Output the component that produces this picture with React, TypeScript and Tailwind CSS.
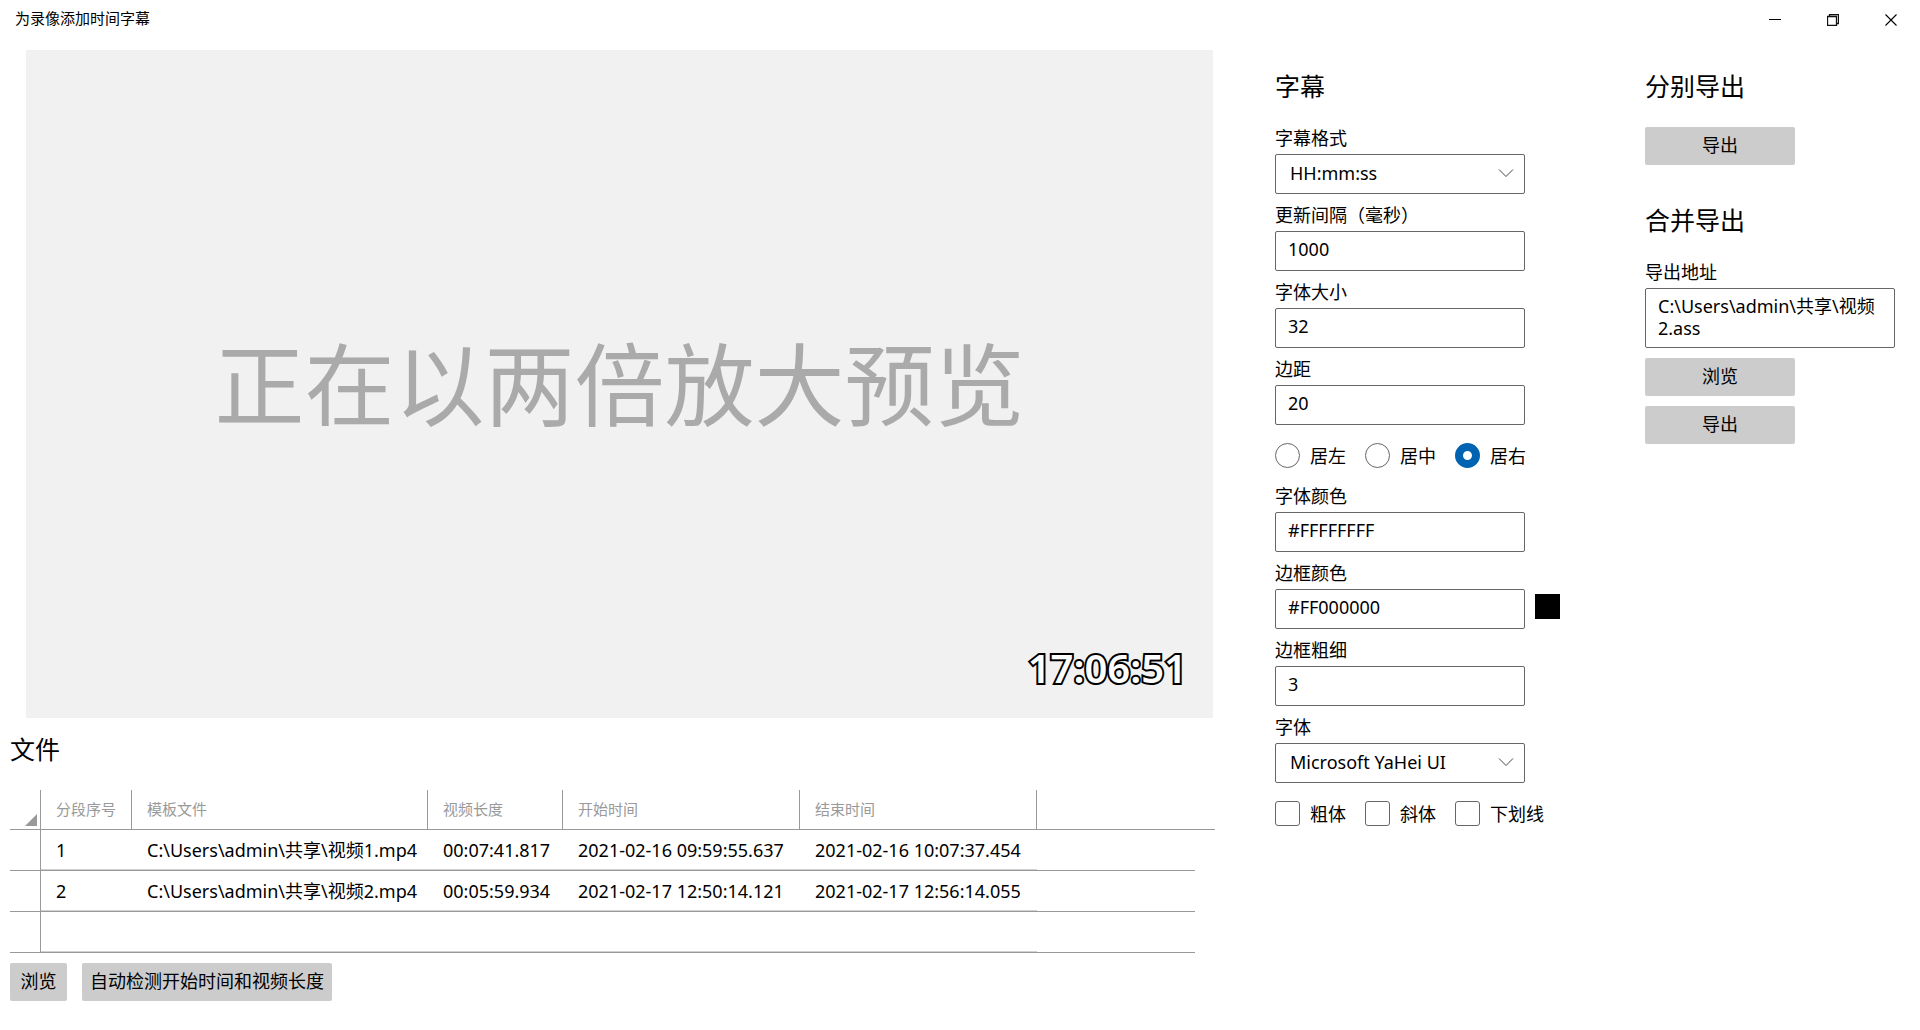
import { useState } from "react";
import type { ReactNode } from "react";

const files = [
  ["1", "C:\\Users\\admin\\共享\\视频1.mp4", "00:07:41.817", "2021-02-16 09:59:55.637", "2021-02-16 10:07:37.454"],
  ["2", "C:\\Users\\admin\\共享\\视频2.mp4", "00:05:59.934", "2021-02-17 12:50:14.121", "2021-02-17 12:56:14.055"],
  ["", "", "", "", ""],
];
const columns = ["分段序号", "模板文件", "视频长度", "开始时间", "结束时间"];

function Heading({ children }: { children: ReactNode }) {
  return <h2 className="text-[25px] leading-8">{children}</h2>;
}

function Button({ children, className }: { children: ReactNode; className: string }) {
  return (
    <button type="button" className={`h-[38px] rounded-xs bg-[#cccccc] pb-[2px] text-lg leading-6 whitespace-nowrap ${className}`}>
      {children}
    </button>
  );
}

function Field({ id, label, children }: { id: string; label: string; children: ReactNode }) {
  return (
    <div className="flex flex-col gap-1">
      <label htmlFor={id} className="text-lg leading-6">
        {label}
      </label>
      {children}
    </div>
  );
}

function TextField({ id, label, value, swatch }: { id: string; label: string; value: string; swatch?: boolean }) {
  return (
    <Field id={id} label={label}>
      <div className="flex items-center gap-[10px]">
        <input
          id={id}
          type="text"
          defaultValue={value}
          className="h-10 w-[250px] rounded-xs border border-[#666666] bg-white px-3 pb-1 text-lg outline-none"
        />
        {swatch && <span className="mb-[5px] size-[25px] bg-black" />}
      </div>
    </Field>
  );
}

function SelectField({ id, label, options }: { id: string; label: string; options: string[] }) {
  return (
    <Field id={id} label={label}>
      <div className="relative w-[250px]">
        <select
          id={id}
          className="block h-10 w-full appearance-none rounded-xs border border-[#666666] bg-white pr-10 pb-[2px] pl-[14px] text-lg outline-none"
        >
          {options.map((o) => (
            <option key={o}>{o}</option>
          ))}
        </select>
        <svg className="pointer-events-none absolute top-[15px] right-[11px]" width="16" height="9" viewBox="0 0 16 9" fill="none" stroke="#444" strokeWidth="1">
          <path d="M1 .5l7 7 7-7" />
        </svg>
      </div>
    </Field>
  );
}

export default function App() {
  const [align, setAlign] = useState("居右");
  return (
    <div className="min-h-screen bg-white font-['Noto_Sans','Noto_Sans_CJK_SC',sans-serif] text-black">
      <header className="flex h-10 items-start justify-between pl-[15px]">
        <h1 className="pt-[7px] text-[15px] leading-[22px]">为录像添加时间字幕</h1>
        <div className="flex">
          <button type="button" aria-label="最小化" className="flex h-10 w-[58px] items-center justify-center">
            <svg width="12" height="12" viewBox="0 0 12 12" stroke="#000" fill="none">
              <path d="M0 5.5h12" />
            </svg>
          </button>
          <button type="button" aria-label="还原" className="flex h-10 w-[58px] items-center justify-center">
            <svg width="12" height="12" viewBox="0 0 12 12" stroke="#111" fill="none">
              <path d="M.5 2.5h9v9h-9zM2.5 2.5v-2h9v9h-2" strokeWidth="1.3" />
            </svg>
          </button>
          <button type="button" aria-label="关闭" className="flex h-10 w-[58px] items-center justify-center">
            <svg width="12" height="12" viewBox="0 0 12 12" stroke="#000" fill="none">
              <path d="M.5 .5l11 11M11.5 .5l-11 11" strokeWidth="1.1" />
            </svg>
          </button>
        </div>
      </header>

      <main className="grid grid-cols-[minmax(0,1fr)_310px_250px] gap-x-[60px] pt-[10px] pr-[25px] pl-[10px]">
        <section>
          <div className="relative mr-[2px] ml-4 flex aspect-video items-center justify-center bg-[#f1f1f1]">
            <p className="text-[90px] leading-none whitespace-nowrap text-[#aaaaaa]">正在以两倍放大预览</p>
            <p className="absolute right-[26px] bottom-5 text-[40px] leading-[60px] font-semibold text-white [-webkit-text-stroke:4px_black] [paint-order:stroke_fill]">
              17:06:51
            </p>
          </div>

          <div className="mt-[15px]">
            <Heading>文件</Heading>
          </div>
          <table className="mt-[25px] w-full table-fixed border-separate border-spacing-0 text-left">
            <colgroup>
              <col className="w-[31px]" />
              <col className="w-[91px]" />
              <col className="w-[296px]" />
              <col className="w-[135px]" />
              <col className="w-[237px]" />
              <col className="w-[237px]" />
              <col />
              <col className="w-5" />
            </colgroup>
            <thead>
              <tr className="h-10">
                <th className="border-r border-b border-[#999999] p-0 align-bottom">
                  <svg className="mb-[3px] ml-[15px]" width="12" height="12" viewBox="0 0 12 12">
                    <path d="M12 0v12H0z" fill="#999" />
                  </svg>
                </th>
                {columns.map((c) => (
                  <th key={c} scope="col" className="border-r border-b border-[#999999] p-0 pl-[15px] text-[15px] leading-5 font-normal text-[#999999]">
                    {c}
                  </th>
                ))}
                <th className="border-b border-[#999999] p-0" />
                <th className="border-b border-[#999999] p-0" />
              </tr>
            </thead>
            <tbody>
              {files.map((row, i) => (
                <tr key={i} className="h-[41px]">
                  <td className="border-r border-b border-[#999999] p-0" />
                  {row.map((cell, j) => (
                    <td key={j} className="border-b border-[#999999] p-0 pl-[15px] text-lg leading-6 whitespace-nowrap shadow-[inset_0_-1px_0_#d0d0d0]">
                      {cell}
                    </td>
                  ))}
                  <td className="border-b border-[#999999] p-0" />
                  <td className="p-0" />
                </tr>
              ))}
            </tbody>
          </table>
          <div className="mt-[10px] flex gap-[15px]">
            <Button className="w-[57px]">浏览</Button>
            <Button className="w-[250px]">自动检测开始时间和视频长度</Button>
          </div>
        </section>

        <section className="pt-5">
          <Heading>字幕</Heading>
          <div className="mt-6 flex flex-col gap-[9px]">
            <SelectField id="format" label="字幕格式" options={["HH:mm:ss"]} />
            <TextField id="interval" label="更新间隔（毫秒）" value="1000" />
            <TextField id="size" label="字体大小" value="32" />
            <TextField id="margin" label="边距" value="20" />
          </div>
          <div className="mt-[18px] flex">
            {["居左", "居中", "居右"].map((a) => (
              <label key={a} className="flex h-[25px] w-[90px] items-center gap-[10px] text-lg leading-6 whitespace-nowrap">
                <input
                  type="radio"
                  name="align"
                  checked={align === a}
                  onChange={() => setAlign(a)}
                  className="size-[25px] shrink-0 appearance-none rounded-full border border-[#666666] bg-white checked:border-8 checked:border-[#0063b1]"
                />
                {a}
              </label>
            ))}
          </div>
          <div className="mt-4 flex flex-col gap-[9px]">
            <TextField id="color" label="字体颜色" value="#FFFFFFFF" />
            <TextField id="border-color" label="边框颜色" value="#FF000000" swatch />
            <TextField id="border-width" label="边框粗细" value="3" />
            <SelectField id="font" label="字体" options={["Microsoft YaHei UI"]} />
          </div>
          <div className="mt-[18px] flex">
            {["粗体", "斜体", "下划线"].map((s) => (
              <label key={s} className="flex h-[25px] w-[90px] items-center gap-[10px] text-lg leading-6 whitespace-nowrap">
                <input
                  type="checkbox"
                  className="size-[25px] shrink-0 appearance-none rounded-[3px] border border-[#666666] bg-white checked:bg-[#0063b1]"
                />
                {s}
              </label>
            ))}
          </div>
        </section>

        <section className="pt-5">
          <Heading>分别导出</Heading>
          <Button className="mt-[25px] w-[150px]">导出</Button>
          <div className="mt-[39px] mb-6">
            <Heading>合并导出</Heading>
          </div>
          <Field id="path" label="导出地址">
            <textarea
              id="path"
              defaultValue={"C:\\Users\\admin\\共享\\视频2.ass"}
              className="block h-[60px] w-full resize-none overflow-hidden rounded-xs border border-[#666666] bg-white px-3 py-[6px] text-lg leading-[22px] outline-none"
            />
          </Field>
          <div className="mt-[10px] flex flex-col gap-[10px]">
            <Button className="w-[150px]">浏览</Button>
            <Button className="w-[150px]">导出</Button>
          </div>
        </section>
      </main>
    </div>
  );
}
